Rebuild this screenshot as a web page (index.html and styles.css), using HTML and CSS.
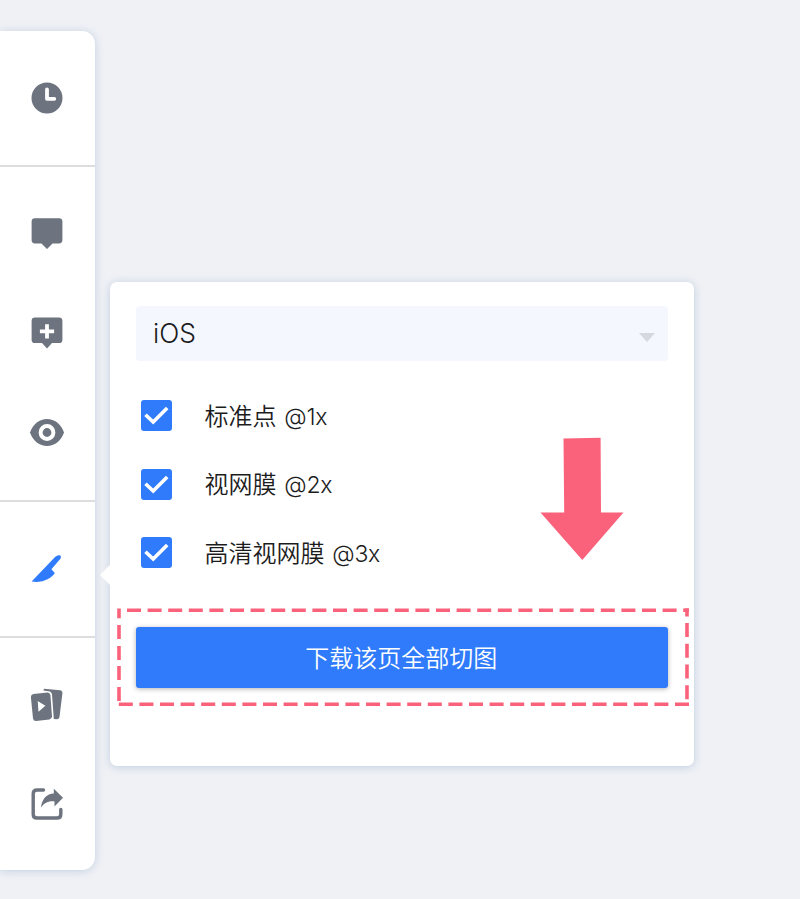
FILE: index.html
```html
<!DOCTYPE html>
<html lang="zh-CN">
<head>
<meta charset="utf-8">
<title>下载切图</title>
<link rel="stylesheet" href="styles.css">
</head>
<body>
<main class="stage">
  <nav class="sidebar">
    <div class="group group-history">
      <svg class="icon" viewBox="0 0 40 40"><circle cx="20" cy="20" r="15.5"/><path class="cut round" d="M20 11.5V20.8H27.3" stroke-width="3.8"/></svg>
    </div>
    <div class="group group-comments">
      <svg class="icon" viewBox="0 0 40 40"><path d="M8 5.3H32a3.4 3.4 0 0 1 3.4 3.4V27a3.4 3.4 0 0 1-3.4 3.4H25.5L20 36L14.500 30.400H8A3.400 3.400 0 0 1 4.600 27V8.700A3.400 3.400 0 0 1 8 5.300Z"/></svg>
      <svg class="icon" viewBox="0 0 40 40"><path d="M8 4.600H32a3.400 3.400 0 0 1 3.400 3.400V26.700a3.400 3.400 0 0 1-3.400 3.400H25L20 35.500L15 30.100H8A3.400 3.400 0 0 1 4.600 26.700V8A3.400 3.400 0 0 1 8 4.600Z"/><path class="cut" d="M20 11.300V25.500M12.900 18.400H27.100" stroke-width="3.800"/></svg>
      <svg class="icon" viewBox="0 0 40 40"><path d="M3 19.500C6 11 12.500 6 20 6s14 5 17 13.500C34 28 27.500 33 20 33S6 28 3 19.500Z"/><circle class="cut" cx="20" cy="19.500" r="6.400" stroke-width="4"/></svg>
    </div>
    <div class="group group-slice">
      <svg class="icon active" viewBox="0 0 40 40"><path d="M4.600 33.400L28.300 8.800Q30.500 6.700 32.700 7.300Q35 8.400 33.200 11L24.400 21.200L27.800 25Q26.400 28.100 20.500 31.300Q13.500 35 4.600 33.400Z"/></svg>
    </div>
    <div class="group group-share">
      <svg class="icon" viewBox="0 0 40 40"><path d="M17 3.700L33 5.300Q35.600 5.700 35.400 8.300L32.500 32Q32 34.500 29.500 34.300L26.800 33.900L25 9.500Q24.500 6.600 21.500 6.200L16.300 5.600Z"/><path d="M6.400 9L20.300 7.600Q23 7.500 23.400 10.200L25 31.300Q25 34.100 22.400 34.600L9 36.100Q6.500 36.100 6 33.500L3.900 12Q3.900 9.400 6.400 9Z"/><path class="play" d="M10.700 16L18.400 20.800L11.500 26.700Z"/></svg>
      <svg class="icon" viewBox="0 0 40 40"><path class="line" d="M16.500 6H10Q6.200 6 6.200 9.800V30.200Q6.200 34 10 34H30Q33.800 34 33.800 30.200V25.500"/><path d="M26.800 4.800L36 13.800L27.500 22.500V17.400C21 16.800 17 19 13.800 23.700C15.200 14.500 19.700 9.800 26.800 9.500Z"/></svg>
    </div>
  </nav>

  <section class="panel">
    <div class="select"><span>iOS</span><i class="caret"></i></div>
    <ul class="options">
      <li><span class="check"><svg viewBox="0 0 31 31"><path d="M4.500 14.700L12.200 22.100L26.200 8"/></svg></span><span class="label">标准点 <b>@1x</b></span></li>
      <li><span class="check"><svg viewBox="0 0 31 31"><path d="M4.500 14.700L12.200 22.100L26.200 8"/></svg></span><span class="label">视网膜 <b>@2x</b></span></li>
      <li><span class="check"><svg viewBox="0 0 31 31"><path d="M4.500 14.700L12.200 22.100L26.200 8"/></svg></span><span class="label">高清视网膜 <b>@3x</b></span></li>
    </ul>
    <div class="download">下载该页全部切图</div>
    <svg class="arrow" viewBox="0 0 84 124"><path d="M23.500 2.500L60.600 1.700L61 76.500H83.500L42.300 124L0.500 76.500H24.200Z"/></svg>
    <svg class="marquee" viewBox="0 0 572 98">
      <path d="M10 2.200H567" stroke-dasharray="14 6.600"/>
      <path d="M567 2.200H572"/>
      <path d="M570 .5V8.600M570 15v14M570 35.800v14M570 56.600v14M570 77.300v14"/>
      <path d="M572 96.200H1" stroke-dasharray="14 6.600"/>
      <path d="M2 .5V10.200M2 17v14M2 38v14M2 58v14M2 79v14"/>
    </svg>
  </section>
</main>
</body>
</html>
```
FILE: styles.css
```css
* { box-sizing: border-box; }

body {
  margin: 0;
  background: #eff1f5;
  color: #1c1c1c;
  font-family: Inter, "Noto Sans CJK SC", sans-serif;
}

.stage {
  display: flex;
  align-items: flex-start;
  gap: 15.5px;
  height: 899px;
  padding-top: 31px;
  overflow: hidden;
}

.sidebar {
  width: 94.5px;
  height: 839.4px;
  flex: none;
  background: #fff;
  border-radius: 0 13px 13px 0;
  box-shadow: 0 1px 9px rgba(112, 144, 190, .35);
}

.group {
  display: flex;
  flex-direction: column;
  align-items: flex-start;
  padding-left: 27px;
}

.group + .group { border-top: 2px solid #dcdddf; }

.group-history { height: 134px; padding-top: 46.5px; }
.group-comments { height: 335px; padding-top: 46px; gap: 60px; }
.group-slice { height: 135.5px; padding-top: 46px; }
.group-share { padding-top: 47px; gap: 59px; }

.icon { width: 40px; height: 40px; fill: #6d747f; flex: none; }
.icon.active { fill: #2f7bfb; }
.icon .cut { fill: none; stroke: #fff; }
.icon .round { stroke-linecap: round; stroke-linejoin: round; }
.icon .play { fill: #fff; }
.icon .line { fill: none; stroke: #6d747f; stroke-width: 3.4; stroke-linecap: round; }

.panel {
  position: relative;
  width: 583.5px;
  height: 484.5px;
  margin-top: 250.5px;
  padding: 24.5px 26px;
  background: #fff;
  border-radius: 7px;
  box-shadow: 0 1px 9px rgba(112, 144, 190, .38);
}

.panel::before {
  content: "";
  position: absolute;
  left: -10.5px;
  top: 282.5px;
  border: solid transparent;
  border-width: 11px 11px 11px 0;
  border-right-color: #fff;
}

.select {
  display: flex;
  align-items: center;
  justify-content: space-between;
  height: 54.5px;
  padding: 0 12.5px 0 17px;
  background: #f4f7fe;
  border-radius: 4px;
  font-size: 26.4px;
  font-weight: 350;
}

.caret {
  margin-top: 8px;
  border: solid transparent;
  border-width: 9px 8.5px 0;
  border-top-color: #d5d8dd;
}

.options {
  display: grid;
  gap: 37.7px;
  margin: 39.5px 0 0;
  padding: 0 0 0 5px;
  list-style: none;
  font-size: 24px;
  font-weight: 350;
}

.options li { display: flex; align-items: center; gap: 32.5px; height: 31px; white-space: nowrap; }
.options b { margin-left: 1px; font-size: 23px; font-weight: 350; letter-spacing: -.2px; }
.label { padding-bottom: 3px; }

.check { width: 31px; height: 31px; background: #2f7bfb; border-radius: 3px; flex: none; }
.check svg { display: block; fill: none; stroke: #fff; stroke-width: 3.6; }

.download {
  display: flex;
  align-items: center;
  justify-content: center;
  height: 61.5px;
  margin-top: 58.6px;
  padding: 0 1px 2px 0;
  background: #2f7bfb;
  border-radius: 3px;
  box-shadow: 0 1px 5px rgba(0, 0, 0, .3);
  color: #fff;
  font-size: 24px;
  font-weight: 350;
}

.arrow { position: absolute; left: 430px; top: 154.5px; width: 84px; height: 124px; fill: #fa627b; }

.marquee { position: absolute; left: 7px; top: 326.5px; width: 572px; height: 98px; fill: none; stroke: #fa627b; stroke-width: 3.600; }
```
